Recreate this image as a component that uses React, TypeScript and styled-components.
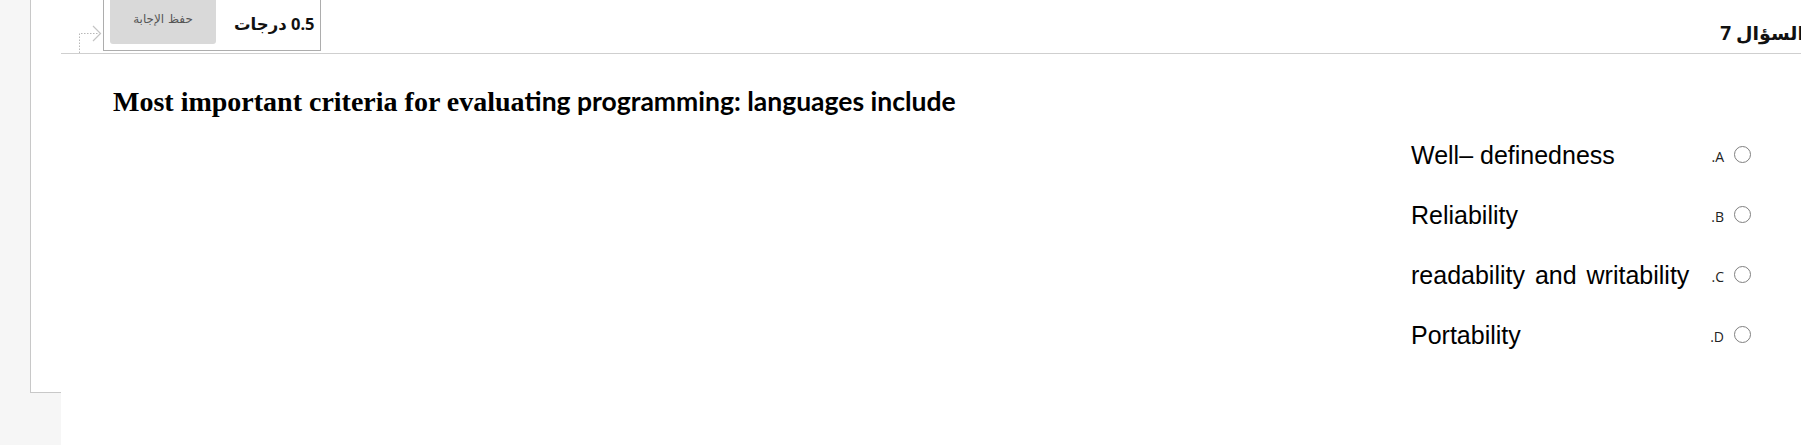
import styled, { createGlobalStyle } from "styled-components";

const GlobalStyle = createGlobalStyle`
  html, body {
    margin: 0;
    padding: 0;
    background: #f6f6f6;
    overflow: hidden;
  }
  body {
    font-family: "Liberation Sans", Arial, sans-serif;
    color: #000;
  }
`;

const Page = styled.div`
  display: flex;
  padding-left: 30px;
  min-height: 445px;
`;

const Gutter = styled.div`
  width: 30px;
  height: 392px;
  background: #fff;
  border-left: 1px solid #c8c8c8;
  border-bottom: 1px solid #c8c8c8;
`;

const Main = styled.main`
  flex: 1;
  background: #fff;
  min-height: 445px;
`;

const Header = styled.div`
  display: flex;
  align-items: flex-start;
  height: 53px;
  padding-left: 18px;
  border-bottom: 1px solid #cfcfcf;
`;

const FlagIcon = styled.svg`
  align-self: flex-end;
  flex-shrink: 0;
`;

const GradeTab = styled.div`
  display: flex;
  align-items: center;
  gap: 18px;
  margin-left: 1px;
  padding: 0 6px 6px 6px;
  border: 1px solid #adadad;
  border-top: none;
`;

const SaveButton = styled.button`
  width: 106px;
  height: 44px;
  border: none;
  border-radius: 0 0 3px 3px;
  background: #d9d9d9;
  color: #555;
  font-family: "DejaVu Sans", "Noto Sans", sans-serif;
  font-size: 12px;
  padding: 0 0 6px;
  cursor: pointer;
`;

const Grade = styled.span`
  font-family: "Noto Sans", "DejaVu Sans", sans-serif;
  font-weight: 700;
  font-size: 16.5px;
  color: #111;
  padding-top: 2px;
`;

const QuestionNo = styled.span`
  margin-left: auto;
  margin-right: -3px;
  margin-top: 21px;
  font-family: "Noto Sans", "DejaVu Sans", sans-serif;
  font-weight: 700;
  font-size: 19px;
  line-height: 24px;
  color: #111;
`;

const Prompt = styled.h2`
  margin: 31px 0 0 52px;
  font-weight: 700;
  font-size: 28px;
  line-height: 32px;
  font-family: "Liberation Serif", "Times New Roman", serif;
`;

const PromptTail = styled.span`
  font-family: Lato, "Open Sans", sans-serif;
  font-size: 26.5px;
  letter-spacing: 0;
`;

const Options = styled.div`
  margin-top: 7px;
  display: flex;
  flex-direction: column;
`;

const OptionRow = styled.label`
  display: flex;
  align-items: center;
  justify-content: flex-end;
  height: 60px;
  padding-right: 50px;
  cursor: pointer;
`;

const OptionText = styled.span<{ $spaced?: boolean }>`
  width: 289px;
  font-size: 25px;
  line-height: 60px;
  white-space: nowrap;
  word-spacing: ${(p) => (p.$spaced ? "3px" : "0")};
`;

const OptionKey = styled.span`
  width: 24px;
  text-align: right;
  font-family: "Open Sans", "Noto Sans", sans-serif;
  font-size: 14px;
  color: #222;
  padding-top: 3px;
`;

const Radio = styled.span`
  width: 15px;
  height: 15px;
  margin-left: 10px;
  margin-bottom: 1px;
  border: 1.4px solid #808080;
  border-radius: 50%;
  background: #fff;
  flex-shrink: 0;
`;

const options = [
  { key: ".A", text: "Well– definedness" },
  { key: ".B", text: "Reliability" },
  { key: ".C", text: "readability and writability", spaced: true },
  { key: ".D", text: "Portability" },
];

export default function App() {
  return (
    <>
      <GlobalStyle />
      <Page>
        <Gutter />
        <Main>
          <Header>
            <FlagIcon width="23" height="29" viewBox="0 0 23 29">
              <path
                d="M0.5 29 V9.5 H20"
                fill="none"
                stroke="#b8b8b8"
                strokeWidth="1"
                strokeDasharray="1.5 1.5"
              />
              <path d="M14 2 L21.5 9.5 L14 17" fill="none" stroke="#c4c4c4" strokeWidth="1.2" />
            </FlagIcon>
            <GradeTab>
              <SaveButton dir="rtl">حفظ الإجابة</SaveButton>
              <Grade dir="rtl">0.5 درجات</Grade>
            </GradeTab>
            <QuestionNo dir="rtl">السؤال 7</QuestionNo>
          </Header>
          <Prompt>
            Most important criteria for evalua
            <PromptTail>ting programming: languages include</PromptTail>
          </Prompt>
          <Options>
            {options.map((o) => (
              <OptionRow key={o.key}>
                <OptionText $spaced={o.spaced}>{o.text}</OptionText>
                <OptionKey>{o.key}</OptionKey>
                <Radio />
              </OptionRow>
            ))}
          </Options>
        </Main>
      </Page>
    </>
  );
}
